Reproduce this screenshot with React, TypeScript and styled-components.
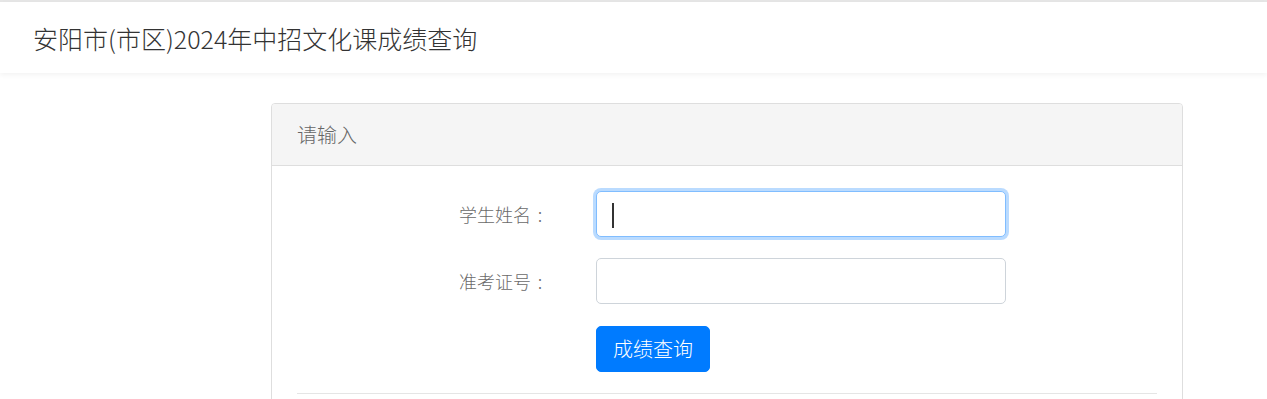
import React from "react";
import styled, { createGlobalStyle } from "styled-components";

const Global = createGlobalStyle`
  html, body { margin: 0; padding: 0; background: #fff; }
  body { font-family: "Noto Sans CJK SC", "Noto Sans", sans-serif; color: #333; }
  * { box-sizing: border-box; }
`;

const Page = styled.div`
  border-top: 2px solid #e6e6e6;
`;

const TopBar = styled.header`
  height: 71px;
  display: flex;
  align-items: center;
  padding-left: 33px;
  background: #fff;
  box-shadow: 0 2px 5px rgba(0, 0, 0, 0.05);
`;

const Title = styled.h1`
  margin: 0;
  font-size: 25px;
  font-weight: 300;
  line-height: 32px;
  color: #333;
`;

const Main = styled.main`
  padding: 30px 0 0 271px;
`;

const Card = styled.section`
  width: 912px;
  border: 1px solid #dedede;
  border-radius: 4px;
  background: #fff;
  overflow: hidden;
`;

const CardHeader = styled.div`
  height: 62px;
  display: flex;
  align-items: center;
  padding-left: 25px;
  background: #f5f5f5;
  border-bottom: 1px solid #dedede;
  font-size: 20px;
  font-weight: 300;
  color: #666;
`;

const CardBody = styled.div`
  padding: 25px 25px 8px;
`;

const Row = styled.div<{ $mb: number }>`
  display: grid;
  grid-template-columns: 252px 410px;
  column-gap: 47px;
  align-items: center;
  margin-bottom: ${(p) => p.$mb}px;
`;

const Label = styled.label`
  text-align: right;
  font-size: 18px;
  font-weight: 300;
  line-height: 26px;
  color: #6a6a6a;
`;

const Colon = styled.span`
  display: inline-block;
  width: 18px;
  text-align: center;
`;

const InputWrap = styled.div`
  position: relative;
  height: 46px;
`;

const Input = styled.input<{ $focused?: boolean }>`
  display: block;
  width: 100%;
  height: 46px;
  padding: 0 15px;
  font-size: 20px;
  font-family: inherit;
  border-radius: 5px;
  outline: none;
  background: #fff;
  border: 1px solid ${(p) => (p.$focused ? "#80bdff" : "#ced4da")};
  box-shadow: ${(p) => (p.$focused ? "0 0 0 3px rgba(0, 123, 255, 0.27)" : "none")};
`;

const Caret = styled.span`
  position: absolute;
  left: 16px;
  top: 12px;
  width: 2px;
  height: 25px;
  background: #333;
`;

const Button = styled.button`
  grid-column: 2;
  justify-self: start;
  height: 46px;
  padding: 0 16px;
  font-size: 20px;
  font-weight: 300;
  font-family: inherit;
  color: #fff;
  background: #007bff;
  border: 1px solid #007bff;
  border-radius: 5px;
  line-height: 1;
  cursor: pointer;
`;

const Divider = styled.hr`
  margin: 21px 0 0;
  border: 0;
  border-top: 1px solid #e5e5e5;
`;

export default function App() {
  return (
    <>
      <Global />
      <Page>
        <TopBar>
          <Title>安阳市(市区)2024年中招文化课成绩查询</Title>
        </TopBar>
        <Main>
          <Card>
            <CardHeader>请输入</CardHeader>
            <CardBody>
              <Row $mb={21}>
                <Label>
                  学生姓名<Colon>:</Colon>
                </Label>
                <InputWrap>
                  <Input $focused />
                  <Caret />
                </InputWrap>
              </Row>
              <Row $mb={22}>
                <Label>
                  准考证号<Colon>:</Colon>
                </Label>
                <InputWrap>
                  <Input />
                </InputWrap>
              </Row>
              <Row $mb={0}>
                <Button>成绩查询</Button>
              </Row>
              <Divider />
            </CardBody>
          </Card>
        </Main>
      </Page>
    </>
  );
}
